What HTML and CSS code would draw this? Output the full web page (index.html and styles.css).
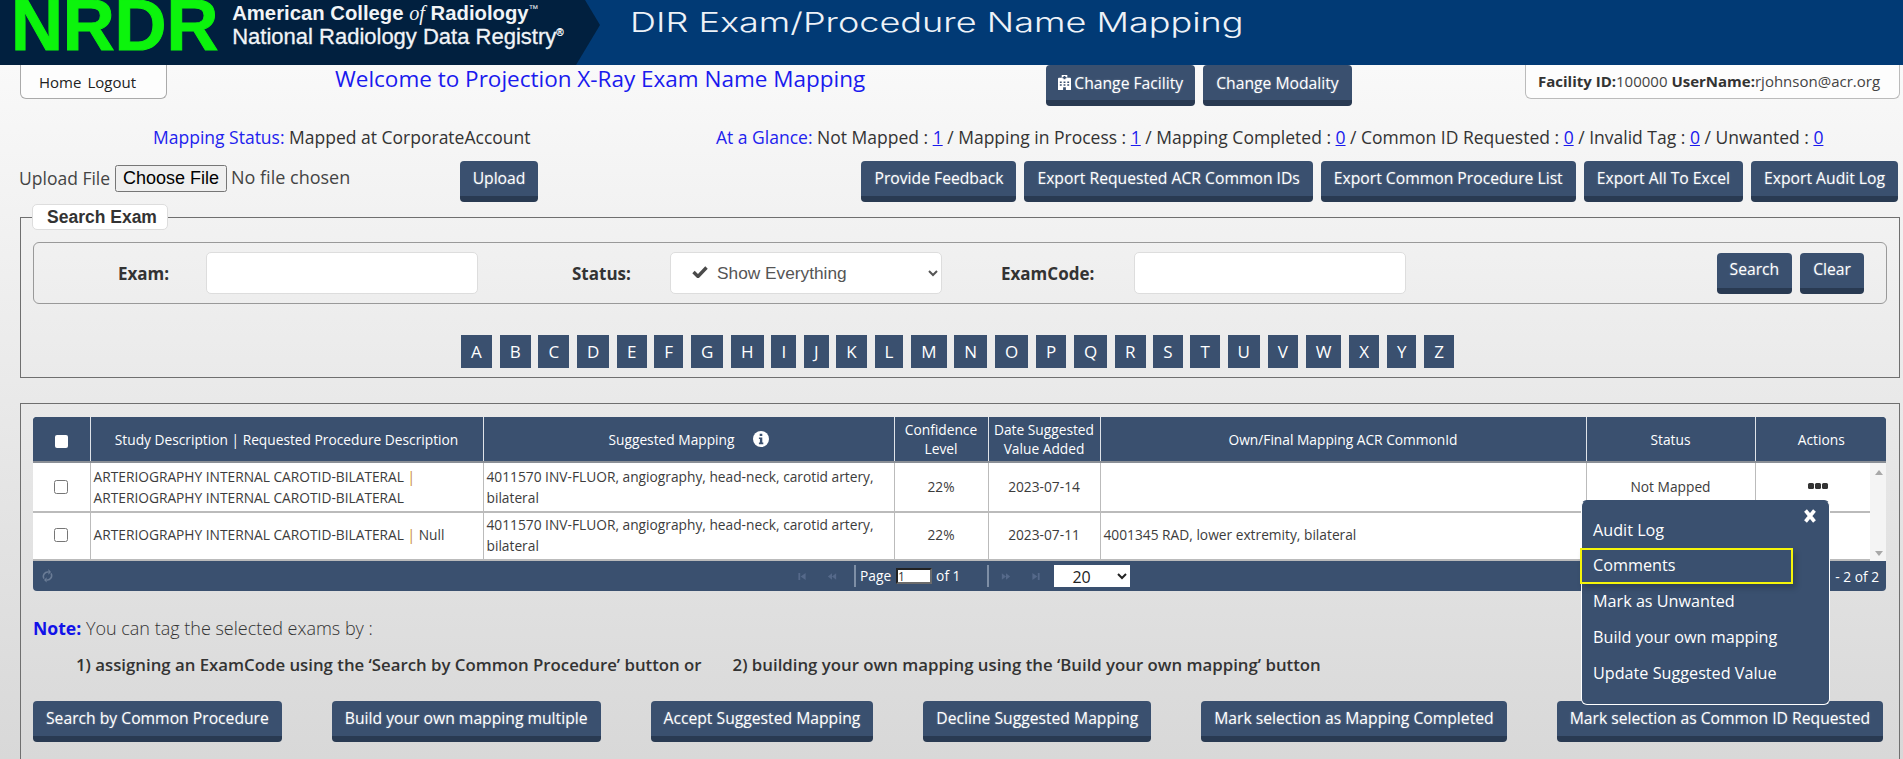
FILE: index.html
```html
<!DOCTYPE html>
<html lang="en">
<head>
<meta charset="utf-8">
<title>DIR Exam/Procedure Name Mapping</title>
<link rel="stylesheet" href="styles.css">
</head>
<body>
<header class="banner">
  <div class="brand">
    <span class="nrdr">NRDR</span>
    <div class="acr">
      <div class="acr-a">American College <i>of</i> Radiology<sup>™</sup></div>
      <div class="acr-b">National Radiology Data Registry<sup>®</sup></div>
    </div>
  </div>
  <svg class="chev" viewBox="0 0 24 65" preserveAspectRatio="none"><polygon points="0,0 9,0 24,25 0,65" fill="#01203f"/></svg>
  <h1 class="apptitle">DIR Exam/Procedure Name Mapping</h1>
</header>

<main class="page">
  <div class="row-top">
    <nav class="homebox"><a>Home</a><a>Logout</a></nav>
    <h2 class="welcome">Welcome to Projection X-Ray Exam Name Mapping</h2>
    <div class="top-actions">
      <button class="btn btn-facility"><svg class="ico-hosp" viewBox="0 0 14 16"><path fill="#fff" d="M4 0h6v3h3a1 1 0 0 1 1 1v12H0V4a1 1 0 0 1 1-1h3zM6 1v1.2H4.8v1.1H6v1.2h2V3.3h1.200V2.200H8V1zM2 7v1.500h2V7zm4 0v1.500h2V7zm4 0v1.500h2V7zM2 10v1.500h2V10zm4 0v1.500h2V10zm4 0v1.500h2V10zM5.500 13v3h3v-3z" fill-rule="evenodd"/></svg>Change Facility</button>
      <button class="btn btn-modality">Change Modality</button>
    </div>
    <div class="userbox"><b>Facility ID:</b>100000 <b>UserName:</b>rjohnson@acr.org</div>
  </div>

  <div class="row-status">
    <div class="mapstatus"><span class="blue">Mapping Status:</span> Mapped at CorporateAccount</div>
    <div class="glance"><span class="blue">At a Glance:</span> Not Mapped : <a class="lnk">1</a> / Mapping in Process : <a class="lnk">1</a> / Mapping Completed : <a class="lnk">0</a> / Common ID Requested : <a class="lnk">0</a> / Invalid Tag : <a class="lnk">0</a> / Unwanted : <a class="lnk">0</a></div>
  </div>

  <div class="row-upload">
    <label class="upl-label">Upload File</label>
    <input class="upl-file" type="file">
    <button class="btn btn-upload">Upload</button>
    <div class="exports">
      <button class="btn">Provide Feedback</button>
      <button class="btn">Export Requested ACR Common IDs</button>
      <button class="btn">Export Common Procedure List</button>
      <button class="btn">Export All To Excel</button>
      <button class="btn">Export Audit Log</button>
    </div>
  </div>

  <fieldset class="search">
    <legend class="search-legend">Search Exam</legend>
    <div class="search-inner">
      <label class="lab lab-exam">Exam:</label>
      <input class="inp inp-exam" type="text">
      <label class="lab lab-status">Status:</label>
      <div class="sel-wrap">
        <select class="sel"><option>Show Everything</option></select>
        <svg class="ico-check" viewBox="0 0 16 12"><path fill="none" stroke="#4a4a4a" stroke-width="3.400" d="M1.500 6l4.500 4.500L14.500 1.500"/></svg>
      </div>
      <label class="lab lab-code">ExamCode:</label>
      <input class="inp" type="text">
      <div class="search-btns">
        <button class="btn">Search</button>
        <button class="btn">Clear</button>
      </div>
    </div>
    <div class="alpha">
      <a>A</a><a>B</a><a>C</a><a>D</a><a>E</a><a>F</a><a>G</a><a>H</a><a>I</a><a>J</a><a>K</a><a>L</a><a>M</a><a>N</a><a>O</a><a>P</a><a>Q</a><a>R</a><a>S</a><a>T</a><a>U</a><a>V</a><a>W</a><a>X</a><a>Y</a><a>Z</a>
    </div>
  </fieldset>

  <fieldset class="results">
    <div class="grid">
      <table class="thead">
        <colgroup><col class="c1"><col class="c2"><col class="c3"><col class="c4"><col class="c5"><col class="c6"><col class="c7"><col class="c8"></colgroup>
        <tr>
          <th><span class="hcheck"></span></th>
          <th>Study Description | Requested Procedure Description</th>
          <th>Suggested Mapping<svg class="ico-info" viewBox="0 0 16 16"><circle cx="8" cy="8" r="8" fill="#fff"/><path fill="#3a506f" d="M6.700 2.800h2.600v2.300H6.700zM5.900 6.400h3.400v5.200h1v1.700H5.900v-1.700h1V8.100h-1z"/></svg></th>
          <th>Confidence Level</th>
          <th>Date Suggested Value Added</th>
          <th>Own/Final Mapping ACR CommonId</th>
          <th>Status</th>
          <th>Actions</th>
        </tr>
      </table>
      <div class="tbody-wrap">
        <table class="tbody">
          <colgroup><col class="c1"><col class="c2"><col class="c3"><col class="c4"><col class="c5"><col class="c6"><col class="c7"><col class="c8b"></colgroup>
          <tr>
            <td class="ctr"><input class="chk" type="checkbox"></td>
            <td>ARTERIOGRAPHY INTERNAL CAROTID-BILATERAL <span class="pipe">|</span> ARTERIOGRAPHY INTERNAL CAROTID-BILATERAL</td>
            <td>4011570 INV-FLUOR, angiography, head-neck, carotid artery, bilateral</td>
            <td class="ctr">22%</td>
            <td class="ctr">2023-07-14</td>
            <td></td>
            <td class="ctr">Not Mapped</td>
            <td class="ctr act"><span class="dots"><i></i><i></i><i></i></span></td>
          </tr>
          <tr>
            <td class="ctr"><input class="chk" type="checkbox"></td>
            <td>ARTERIOGRAPHY INTERNAL CAROTID-BILATERAL <span class="pipe">|</span> Null</td>
            <td>4011570 INV-FLUOR, angiography, head-neck, carotid artery, bilateral</td>
            <td class="ctr">22%</td>
            <td class="ctr">2023-07-11</td>
            <td>4001345 RAD, lower extremity, bilateral</td>
            <td class="ctr"></td>
            <td class="ctr"></td>
          </tr>
        </table>
        <div class="vscroll"><span class="arr-up"></span><span class="arr-down"></span></div>
      </div>
      <div class="pager">
        <svg class="ico-refresh" viewBox="0 0 12 16"><path fill="none" stroke="#6a7c96" stroke-width="1.800" d="M2 11a5 5 0 0 1 5-7.500M10 5a5 5 0 0 1-5 7.500"/><path fill="#6a7c96" d="M7 0l3 3.500-3 3zM5 9.500v6l-3-3z"/></svg>
        <div class="pager-center">
          <svg class="ico-nav" viewBox="0 0 10 10"><path fill="#55698a" d="M1 1h2v8H1zM9 1v8L3.500 5z"/></svg>
          <svg class="ico-nav" viewBox="0 0 12 10"><path fill="#55698a" d="M6 1v8L1 5zM11 1v8L6 5z"/></svg>
          <span class="sep"></span>
          <span class="pg">Page</span><input class="pg-in" type="text" value="1"><span class="pg">of 1</span>
          <span class="sep sep2"></span>
          <svg class="ico-nav" viewBox="0 0 12 10"><path fill="#55698a" d="M1 1l5 4-5 4zM6 1l5 4-5 4z"/></svg>
          <svg class="ico-nav ico-last" viewBox="0 0 10 10"><path fill="#55698a" d="M1 1l5.500 4L1 9zM7 1h2v8H7z"/></svg>
          <select class="pg-size"><option>20</option></select>
        </div>
        <span class="pg-range">1 - 2 of 2</span>
      </div>
    </div>

    <p class="note"><b>Note:</b> You can tag the selected exams by :</p>
    <p class="howto"><span>1) assigning an ExamCode using the ‘Search by Common Procedure’ button or</span><span>2) building your own mapping using the ‘Build your own mapping’ button</span></p>
    <div class="bulk">
      <button class="btn">Search by Common Procedure</button>
      <button class="btn">Build your own mapping multiple</button>
      <button class="btn">Accept Suggested Mapping</button>
      <button class="btn">Decline Suggested Mapping</button>
      <button class="btn">Mark selection as Mapping Completed</button>
      <button class="btn">Mark selection as Common ID Requested</button>
    </div>
  </fieldset>

  <div class="popup">
    <svg class="ico-x" viewBox="0 0 14 14"><path fill="none" stroke="#fff" stroke-width="3.600" d="M2.500 1.500l9 11M11.500 1.500l-9 11"/></svg>
    <ul class="menu">
      <li>Audit Log</li>
      <li class="hl">Comments</li>
      <li>Mark as Unwanted</li>
      <li>Build your own mapping</li>
      <li>Update Suggested Value</li>
    </ul>
  </div>
</main>
</body>
</html>
```
FILE: styles.css
```css
* { box-sizing: border-box; }
html, body { margin: 0; height: 759px; overflow: hidden; }
body {
  font-family: "Open Sans", "Liberation Sans", sans-serif;
  font-size: 16px;
  color: #333;
  background: #f8f8f8;
}
button, input, select { font-family: inherit; }

/* banner */
.banner {
  height: 65px;
  display: flex;
  background: #013a75;
  overflow: hidden;
}
.brand {
  width: 576px;
  flex: none;
  display: flex;
  background: #01203f;
  padding-left: 11px;
}
.chev { width: 24px; height: 65px; flex: none; }
.nrdr {
  font-family: "Liberation Sans", sans-serif;
  font-weight: 700;
  font-size: 72px;
  line-height: 50px;
  height: 50px;
  letter-spacing: -0.2px;
  color: #0cf40c;
  -webkit-text-stroke: 1px #0cf40c;
}
.acr {
  margin-left: 14px;
  font-family: "Liberation Sans", sans-serif;
  color: #f1f4f7;
}
.acr-a { font-size: 20.300px; font-weight: 700; line-height: 23px; margin-top: 2px; white-space: nowrap; }
.acr-a i { font-family: "Liberation Serif", serif; font-weight: 400; }
.acr-b { font-size: 22px; line-height: 23px; white-space: nowrap; -webkit-text-stroke: 0.3px #f1f4f7; }
.acr sup { font-size: 10px; line-height: 0; font-weight: 400; }
.apptitle {
  margin: 0 0 0 30px;
  font-family: "Inter", sans-serif;
  font-weight: 300;
  font-size: 27px;
  line-height: 46px;
  color: #eef2f8;
  white-space: nowrap;
  transform: scaleX(1.336);
  transform-origin: left center;
}

/* page */
.page {
  position: relative;
  height: 694px;
  padding: 0 3px 0 20px;
  background: linear-gradient(#f9f9f9, #d8d8d8);
  color: #333;
}
.btn {
  display: block;
  height: 41px;
  padding: 0 13px 2px;
  border: 0;
  border-bottom: 6px solid #293a52;
  border-radius: 4px;
  background: #3a506f;
  color: #fff;
  font-size: 15.700px;
  line-height: 20px;
  white-space: nowrap;
  text-shadow: 0 0 2px rgba(255,255,255,.35);
}

.row-top { display: flex; height: 41px; align-items: flex-start; }
.homebox {
  width: 147px;
  height: 34px;
  padding: 5px 0 0 18px;
  display: flex;
  gap: 6px;
  border: 1px solid #aaa;
  border-top: 0;
  border-radius: 0 0 6px 6px;
  background: #fdfdfd;
  font-size: 15px;
  line-height: 24px;
  color: #222;
}
.welcome {
  margin: 0 0 0 168px;
  font-size: 22.500px;
  font-weight: 400;
  line-height: 28px;
  color: #1a1aee;
  white-space: nowrap;
}
.top-actions { margin-left: 181px; display: flex; gap: 8px; }
.btn-facility { display: flex; align-items: center; padding: 0 12px; }
.btn-modality { padding-bottom: 0; }
.ico-hosp { width: 13px; height: 15px; margin-right: 3px; }
.userbox {
  margin-left: auto;
  width: 375px;
  height: 34px;
  border: 1px solid #bbb;
  border-top: 0;
  border-radius: 0 0 6px 6px;
  background: #fdfdfd;
  padding: 4px 0 0 12px;
  font-size: 15px;
  line-height: 24px;
  color: #444;
  white-space: nowrap;
}
.userbox b { font-weight: 700; color: #333; }

.row-status {
  height: 55px;
  padding-top: 20px;
  display: flex;
  line-height: 22px;
  font-size: 17.500px;
  white-space: nowrap;
}
.blue { color: #2222ee; }
.lnk { color: #1a1aee; text-decoration: underline; }
.mapstatus { margin-left: 133px; width: 563px; }
.row-upload { display: flex; height: 41px; align-items: center; }
.upl-label { width: 96px; flex: none; margin: 0 0 8px -1px; color: #444; font-size: 17.500px; }
.upl-file { width: 240px; flex: none; margin-bottom: 6px; font-size: 18px; color: #444; }
.btn-upload { margin-left: 105px; width: 78px; padding: 0 0 2px; }
.exports { margin-left: auto; margin-right: 2px; display: flex; gap: 8px; }

/* search fieldset */
.search {
  margin: 2px 0 0;
  height: 174px;
  min-width: 0;
  padding: 12px 12px 0;
  border: 1px solid #6f6f6f;
}
.search-legend {
  margin-left: -1px;
  height: 26px;
  padding: 0 10px 0 14px;
  background: #fff;
  border: 1px solid #ddd;
  border-radius: 5px;
  font-family: "Liberation Sans", sans-serif;
  font-weight: 700;
  font-size: 17.500px;
  line-height: 24px;
  color: #333;
}
.search-inner {
  height: 62px;
  display: flex;
  align-items: center;
  border: 1px solid #999;
  border-radius: 6px;
}
.lab { font-weight: 700; color: #333; font-size: 17px; }
.lab-exam { width: 137px; flex: none; padding-left: 84px; margin-right: 35px; }
.lab-status { width: 70px; flex: none; margin-left: 94px; margin-right: 28px; }
.lab-code { width: 120px; flex: none; margin-left: 59px; margin-right: 13px; }
.inp, .sel {
  flex: none;
  width: 272px;
  height: 42px;
  border: 1px solid #ddd;
  border-radius: 5px;
  background: #fff;
}
.sel-wrap { position: relative; flex: none; height: 42px; }
.sel {
  display: block;
  padding-left: 42px;
  font-family: "Liberation Sans", sans-serif;
  font-size: 17.300px;
  color: #555;
}
.ico-check { position: absolute; left: 22px; top: 14px; width: 16px; height: 12px; }
.search-btns { margin-left: auto; margin-right: 22px; display: flex; gap: 8px; }
.alpha {
  margin-top: 31px;
  padding-right: 5px;
  display: flex;
  justify-content: center;
  gap: 7.800px;
}
.alpha a {
  height: 33px;
  padding: 0 10px;
  background: #3a506f;
  color: #fff;
  font-size: 17px;
  line-height: 33px;
}

/* results */
.results {
  margin: 25px 0 0;
  height: 400px;
  min-width: 0;
  padding: 13px 13px 0 12px;
  border: 1px solid #6f6f6f;
}
.grid { border-radius: 4px; overflow: hidden; background: #3a506f; }
table { border-collapse: collapse; table-layout: fixed; }
.thead { width: 1854px; }
.tbody { width: 1837px; }
.c1 { width: 57px; }
.c2 { width: 393px; }
.c3 { width: 411px; }
.c4 { width: 94px; }
.c5 { width: 112px; }
.c6 { width: 486px; }
.c7 { width: 169px; }
.c8 { width: 132px; }
.c8b { width: 115px; }
.thead th {
  height: 45px;
  padding: 0 4px;
  border-left: 1px solid #dfe3e8;
  border-bottom: 2px solid #8a8f96;
  background: #3a506f;
  color: #fff;
  font-size: 13.750px;
  font-weight: 400;
  line-height: 19px;
}
.thead th:first-child { border-left: 0; }
.hcheck {
  display: block;
  width: 13px;
  height: 13px;
  margin: 4px auto 0;
  background: #fff;
  border-radius: 2px;
}
.ico-info { width: 16px; height: 16px; margin-left: 18px; vertical-align: -2px; }
.tbody-wrap { display: flex; height: 98px; background: #fff; }
.tbody td {
  height: 48px;
  padding: 0 3px;
  border: 1px solid #bbb;
  border-width: 0 0 2px 1px;
  background: #fff;
  font-size: 13.750px;
  line-height: 21px;
  color: #3c3c3c;
}
.tbody tr:last-child td { padding-bottom: 2px; }
.tbody td:first-child { border-left: 0; }
.ctr { text-align: center; }
.tbody .act { padding-left: 14px; }
.chk { display: block; width: 14px; height: 14px; margin: 0 auto; }
.pipe { color: #c88a30; }
.dots { display: inline-flex; gap: 1px; vertical-align: 3px; }
.dots i { width: 6px; height: 6px; border-radius: 1.500px; background: #333; }
.vscroll {
  flex: none;
  width: 17px;
  background: #f4f4f4;
  display: flex;
  flex-direction: column;
  justify-content: space-between;
  align-items: center;
  padding: 7px 0 5px;
}
.arr-up { border: 4px solid transparent; border-top: 0; border-bottom: 5px solid #a8a8a8; }
.arr-down { border: 4px solid transparent; border-bottom: 0; border-top: 5px solid #a8a8a8; }

.pager {
  height: 30px;
  display: flex;
  align-items: center;
  padding: 0 7px 0 9px;
  color: #fff;
  font-size: 13.750px;
}
.ico-refresh { width: 11px; height: 14px; }
.pager-center { margin-left: 744px; display: flex; align-items: center; }
.ico-nav { width: 10px; height: 9px; margin-right: 20px; }
.ico-last { margin-right: 13px; }
.sep { width: 2px; height: 22px; margin: 0 4px 0 -3px; background: #7e8fa6; }
.sep2 { margin: 0 12px 0 27px; }
.pg-in {
  width: 36px;
  height: 16px;
  margin: 0 4px 0 5px;
  padding: 0;
  border: 2px solid #222;
  border-right-color: #6b6b6b;
  border-bottom-color: #6b6b6b;
  font-size: 12px;
  line-height: 12px;
  color: #333;
  background: #fff;
}
.pg { line-height: 20px; }
.pg-size { width: 76px; height: 22px; padding-left: 14px; border: 0; border-radius: 0; background: #fff; font-size: 16px; color: #222; }
.pg-range { margin-left: auto; }

.note { margin: 26px 0 0; font-size: 18px; line-height: 22px; font-weight: 300; color: #333; }
.note b { font-size: 17.600px; font-weight: 700; color: #1212e8; }
.howto { margin: 15px 0 0 43px; display: flex; gap: 31px; font-size: 16.800px; font-weight: 600; line-height: 22px; color: #333; white-space: nowrap; }
.bulk { margin-top: 25px; display: flex; gap: 50px; }

/* popup */
.popup {
  position: absolute;
  left: 1581px;
  top: 435px;
  width: 249px;
  height: 205px;
  background: #3a506f;
  border: 1px solid #fff;
  border-top-color: #3a506f;
  border-radius: 6px;
  color: #fff;
}
.ico-x { position: absolute; left: 221px; top: 8px; width: 14px; height: 14px; }
.menu { list-style: none; margin: 0; padding: 11.500px 0 0; font-size: 16.200px; }
.menu li { height: 35.800px; line-height: 35.800px; padding-left: 11px; }
.menu .hl {
  width: 213px;
  margin-left: -2px;
  padding-left: 11px;
  line-height: 30px;
  border: 2px solid #f5f50a;
  box-shadow: 3px 4px 6px rgba(0,0,0,.2);
}
```
